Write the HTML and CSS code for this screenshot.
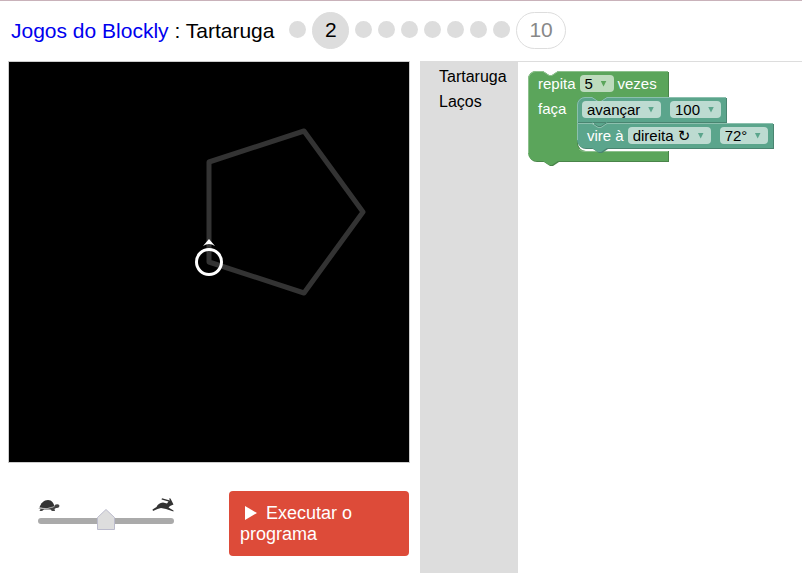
FILE: index.html
```html
<!DOCTYPE html>
<html lang="pt-BR">
<head>
<meta charset="utf-8">
<title>Jogos do Blockly : Tartaruga</title>
<link rel="stylesheet" href="styles.css">
</head>
<body>
<header class="header">
  <h1 class="title"><a href="#jogos">Jogos do Blockly</a> : Tartaruga</h1>
  <nav class="levels" aria-label="Níveis">
    <a class="dot" href="#1" aria-label="Nível 1"></a>
    <a class="level current" href="#2">2</a>
    <a class="dot" href="#3" aria-label="Nível 3"></a>
    <a class="dot" href="#4" aria-label="Nível 4"></a>
    <a class="dot" href="#5" aria-label="Nível 5"></a>
    <a class="dot" href="#6" aria-label="Nível 6"></a>
    <a class="dot" href="#7" aria-label="Nível 7"></a>
    <a class="dot" href="#8" aria-label="Nível 8"></a>
    <a class="dot" href="#9" aria-label="Nível 9"></a>
    <a class="level last" href="#10">10</a>
  </nav>
</header>
<main class="main">
  <section class="stage">
    <svg class="drawing" width="400" height="400" viewBox="0 0 400 400" role="img" aria-label="Desenho da tartaruga">
      <path d="M200 200V100L295 69L354 150L295 231Z" fill="none" stroke="#333" stroke-width="5" stroke-linejoin="round"/>
      <circle cx="200" cy="200" r="12.5" fill="none" stroke="#fff" stroke-width="3"/>
      <path d="M200 177L206 184Q200 180 194 184Z" fill="#fff"/>
    </svg>
    <div class="controls">
      <div class="speed">
        <div class="speed-icons">
          <svg width="22" height="13" viewBox="0 0 22 13" aria-hidden="true">
            <path d="M1.500 8.500C2.500 4.500 6 1 10 1C14 1 15.500 4 16.500 7.500Q10 10.500 1.500 8.500Z" fill="#333"/>
            <path d="M0 9Q8 11 15.500 8L17.500 5.500Q21.500 4.500 21.500 7Q21 9.500 18 9L16.500 10L17 12H14L12.500 10.500H6L4 12H1.500L2.500 10Z" fill="#444"/>
            <path d="M1 9Q9 11 16.500 7.500" fill="none" stroke="#bbb" stroke-width=".7"/>
          </svg>
          <svg width="22" height="14" viewBox="0 0 22 14" aria-hidden="true">
            <path d="M.5 11.500L4.500 9Q6 5 11 4.500L15 5.500L16.500 3.500L9.500 1.500L10 .3L18 2.500L17 .5L18.500 .5L20 3.500L21.500 6.500L18 8L16.500 9.500L21.500 12.500V13.500L14 11L9 10L5.500 11L1 13Z" fill="#333"/>
          </svg>
        </div>
        <input class="slider" type="range" min="0" max="100" value="50" aria-label="Velocidade">
      </div>
      <button class="run" type="button"><svg class="play" width="14" height="16" viewBox="0 0 14 16" aria-hidden="true"><path d="M1 1L13 8L1 15Z" fill="#fff"/></svg>Executar o programa</button>
    </div>
  </section>
  <nav class="toolbox">
    <a href="#tartaruga">Tartaruga</a>
    <a href="#lacos">Laços</a>
  </nav>
  <section class="workspace">
    <div class="block">
      <svg class="shapes" width="248" height="98" viewBox="0 0 248 98" aria-hidden="true">
        <path d="M1 9A8 8 0 0 1 9 1H16L22 5H25L31 1H141V27H80L74 31H71L65 27H58A8 8 0 0 0 50 35V72A8 8 0 0 0 58 80H141V91H31L25 95H22L16 91H9A8 8 0 0 1 1 83Z" fill="#498449"/>
        <path d="M0 8A8 8 0 0 1 8 0H15L21 4H24L30 0H140V26H79L73 30H70L64 26H57A8 8 0 0 0 49 34V72A8 8 0 0 0 57 80H140V90H30L24 94H21L15 90H8A8 8 0 0 1 0 82Z" fill="#5ba55b"/>
        <path d="M.5 82V8A7.500 7.500 0 0 1 8 .5H15L21 4.500H24L30 .5H140M51 78A8 8 0 0 0 57 80.500H140" fill="none" stroke="#8cc08c"/>
        <path d="M50 61V35A8 8 0 0 1 58 27H65L71 31H74L80 27H199V52H80L74 56H71L65 52H50Z" fill="#498470"/>
        <path d="M49 52V34A8 8 0 0 1 57 26H64L70 30H73L79 26H198V51H49Z" fill="#5ba58c"/>
        <path d="M49.500 52V34A7.500 7.500 0 0 1 57 26.500H64L70 30.500H73L79 26.500H198" fill="none" stroke="#8cc0ae"/>
        <path d="M50 53H246V78H80L74 82H71L65 78H58A8 8 0 0 1 50 70Z" fill="#498470"/>
        <path d="M49 52H64L70 56H73L79 52H245V77H79L73 81H70L64 77H57A8 8 0 0 1 49 69Z" fill="#5ba58c"/>
        <path d="M64 51L70 55H73L79 51V52H64Z" fill="#5ba58c"/>
        <path d="M49.500 69V52.500H64L70 56.500H73L79 52.500H245" fill="none" stroke="#8cc0ae"/>
      </svg>
      <div class="row">
        <label for="times">repita</label>
        <span class="field loop"><select id="times"><option>5</option></select></span>
        <span>vezes</span>
      </div>
      <div class="body">
        <span class="do">faça</span>
        <div class="stack">
          <div class="row statement">
            <span class="field"><select aria-label="Movimento"><option>avançar</option></select></span>
            <span class="field value"><select aria-label="Distância"><option>100</option></select></span>
          </div>
          <div class="row statement turn">
            <label for="direction">vire à</label>
            <span class="field"><select id="direction"><option>direita ↻</option></select></span>
            <span class="field value"><select aria-label="Ângulo"><option>72°</option></select></span>
          </div>
        </div>
      </div>
    </div>
  </section>
</main>
</body>
</html>
```
FILE: styles.css
```css
* {
  box-sizing: border-box;
}

body {
  display: flex;
  flex-direction: column;
  min-height: 100vh;
  margin: 0;
  border-top: 1px solid #c9b2ba;
  background: #fff;
  color: #000;
  font-family: "Liberation Sans", Arial, sans-serif;
  font-size: 16px;
}

a {
  color: inherit;
  text-decoration: none;
}

.header {
  display: flex;
  align-items: center;
  gap: 15px;
  height: 60px;
  padding-left: 11px;
}

.title {
  margin: 0;
  font-size: 21px;
  font-weight: 400;
  white-space: nowrap;
}

.title a {
  color: #00e;
}

.levels {
  display: flex;
  align-items: center;
  gap: 6px;
  padding-bottom: 2px;
}

.dot {
  width: 17px;
  height: 17px;
  margin-bottom: 2px;
  border-radius: 50%;
  background: #ddd;
}

.level {
  display: flex;
  align-items: center;
  justify-content: center;
  height: 37px;
  border: 1px solid #ddd;
  border-radius: 19px;
  font-size: 21px;
}

.current {
  width: 37px;
  background: #ddd;
}

.last {
  padding: 0 12px;
  color: #888;
}

.main {
  display: grid;
  flex: 1;
  grid-template-columns: auto auto 1fr;
}

.stage {
  padding: 0 10px 0 8px;
}

.drawing {
  display: block;
  box-sizing: content-box;
  border: 1px solid #ccc;
  background: #000;
}

.controls {
  display: flex;
  justify-content: space-between;
  padding: 28px 1px 16px 30px;
}

.speed {
  display: flex;
  flex-direction: column;
  width: 136px;
  padding-top: 7px;
}

.speed-icons {
  display: flex;
  align-items: flex-end;
  justify-content: space-between;
  height: 14px;
}

.slider {
  width: 100%;
  height: 21px;
  margin: -2px 0 0;
  appearance: none;
  background: transparent;
}

.slider::-webkit-slider-runnable-track {
  height: 6px;
  border-radius: 3px;
  background: #aaa;
}

.slider::-webkit-slider-thumb {
  width: 18px;
  height: 21px;
  margin-top: -9px;
  appearance: none;
  background: url("data:image/svg+xml,%3Csvg xmlns='http://www.w3.org/2000/svg' width='18' height='21'%3E%3Cpath d='M.5 20.500V8.500L9 .5L17.500 8.500V20.500Z' fill='%23ddd' stroke='%23bbc'/%3E%3C/svg%3E");
}

.run {
  width: 180px;
  padding: 12px 11px 11px;
  border: 0;
  border-radius: 4px;
  background: #dd4b39;
  color: #fff;
  font-family: inherit;
  font-size: 18px;
  line-height: 21px;
  text-align: left;
}

.play {
  margin: 0 8px 0 4px;
  vertical-align: -2px;
}

.toolbox {
  width: 98px;
  padding: 3px 0 0 19px;
  background: #ddd;
  line-height: 25px;
}

.toolbox a {
  display: block;
}

.workspace {
  position: relative;
  border-top: 1px solid #ddd;
}

.block {
  position: absolute;
  top: 9px;
  left: 10px;
  color: #fff;
  font-size: 15px;
  white-space: nowrap;
}

.shapes {
  position: absolute;
  top: 0;
  left: 0;
}

.row {
  position: relative;
  display: flex;
  align-items: center;
  gap: 4px;
  height: 26px;
  padding: 0 0 2px 10px;
}

.body {
  position: relative;
  display: flex;
}

.do {
  width: 49px;
  padding-left: 10px;
  line-height: 24px;
}

.statement {
  padding-left: 5px;
}

.turn {
  padding-left: 10px;
}

.field {
  position: relative;
  display: flex;
  color: #5ba58c;
}

.loop {
  color: #5ba55b;
}

.value {
  margin-left: 5px;
}

.field::after {
  position: absolute;
  top: 6px;
  right: 7px;
  width: 6px;
  height: 6px;
  background: currentColor;
  clip-path: polygon(0 0, 100% 0, 50% 100%);
  content: "";
  pointer-events: none;
}

.field select {
  height: 17px;
  padding: 0 20px 0 5px;
  border: 0;
  border-radius: 4px;
  appearance: none;
  background: #bddbd1;
  color: #000;
  font-family: "Liberation Sans", Arial, "DejaVu Sans", sans-serif;
  font-size: 15px;
  line-height: 17px;
}

.loop select {
  background: #bddbbd;
}
```
